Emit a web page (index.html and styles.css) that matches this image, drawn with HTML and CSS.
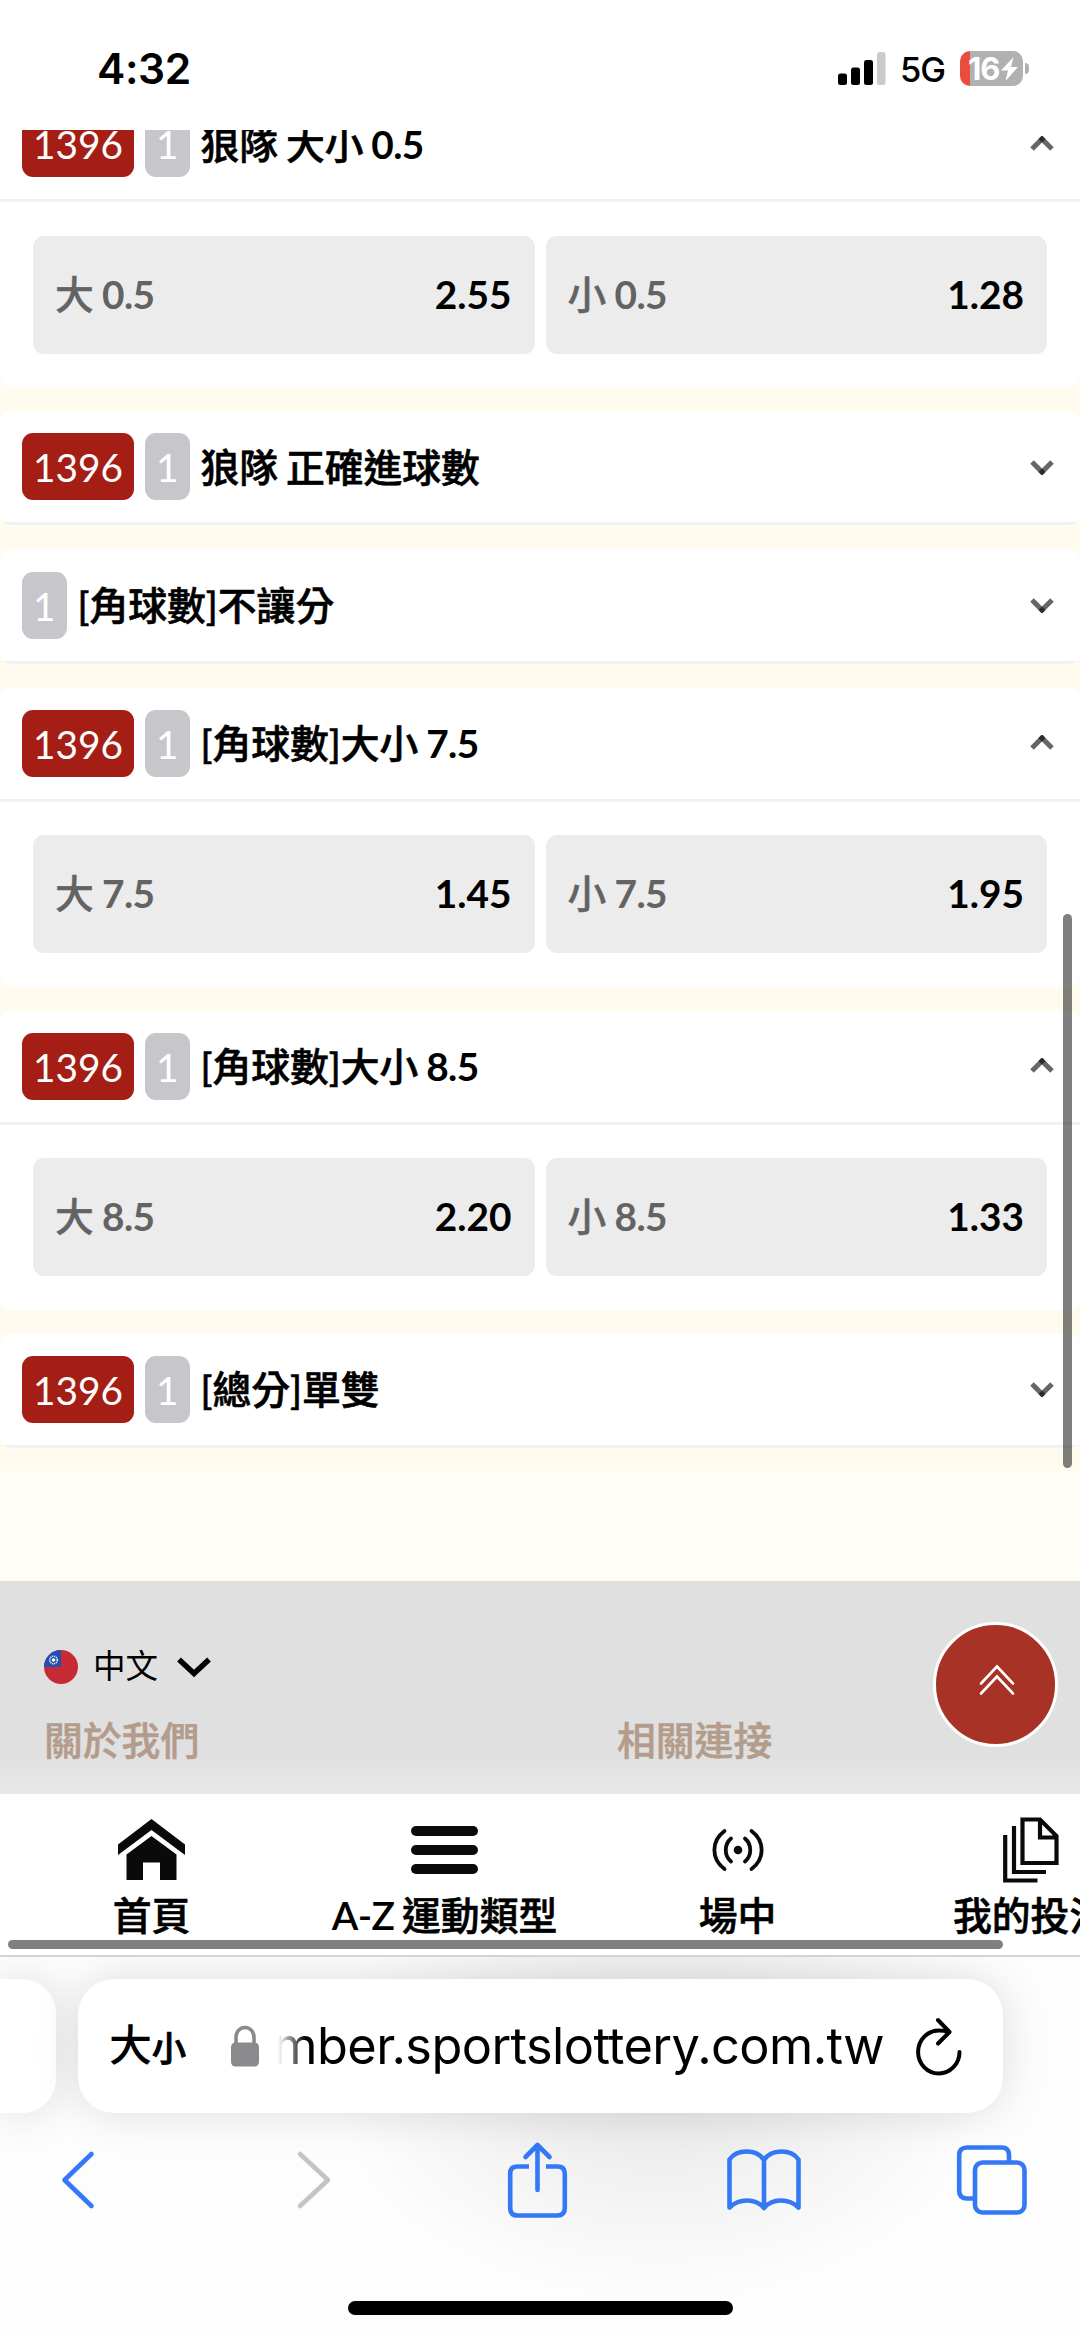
FILE: index.html
```html
<!DOCTYPE html>
<html lang="zh-Hant">
<head>
<meta charset="utf-8">
<title>台灣運彩</title>
<link rel="stylesheet" href="styles.css">
</head>
<body>
<svg class="defs" width="0" height="0">
  <symbol id="up" viewBox="0 0 24 16"><path d="M2 13 12 3l10 10" fill="none" stroke="#666" stroke-width="5"/><path d="M12 -.5 15.5 3 12 6.5 8.500 3z" fill="#2b2b2b"/></symbol>
  <symbol id="down" viewBox="0 0 24 16"><path d="M2 3 12 13 22 3" fill="none" stroke="#666" stroke-width="5"/><path d="M12 9.500 15.5 13 12 16.500 8.500 13z" fill="#2b2b2b"/></symbol>
</svg>
<div class="phone">
  <header class="status">
    <span class="clock">4:32</span>
    <div class="indicators">
      <svg class="signal" width="48" height="33" viewBox="0 0 48 33"><rect x="0" y="21.500" width="9" height="11.500" rx="2.500"/><rect x="13" y="15.500" width="9" height="17.500" rx="2.500"/><rect x="26" y="8" width="9" height="25" rx="2.500"/><rect x="39" y="0" width="8.500" height="33" rx="2.500" fill="#cbcbcb"/></svg>
      <span class="network">5G</span>
      <div class="battery"><span>16</span><svg width="17" height="24" viewBox="0 0 17 24"><path d="M12.500 0 0 13.500h7L4.500 24 17 10h-7z" fill="#fff"/></svg></div>
      <i class="battery-cap"></i>
    </div>
  </header>

  <main class="page">
    <div class="markets">
      <section class="card">
        <div class="head"><span class="code">1396</span><span class="count">1</span><h2>狼隊 大小 <b>0.5</b></h2><svg class="chev"><use href="#up"/></svg></div>
        <div class="options"><div class="opt"><span>大 <b>0.5</b></span><strong>2.55</strong></div><div class="opt"><span>小 <b>0.5</b></span><strong>1.28</strong></div></div>
      </section>
      <section class="card">
        <div class="head"><span class="code">1396</span><span class="count">1</span><h2>狼隊 正確進球數</h2><svg class="chev"><use href="#down"/></svg></div>
      </section>
      <section class="card">
        <div class="head"><span class="count">1</span><h2>[角球數]不讓分</h2><svg class="chev"><use href="#down"/></svg></div>
      </section>
      <section class="card">
        <div class="head"><span class="code">1396</span><span class="count">1</span><h2>[角球數]大小 <b>7.5</b></h2><svg class="chev"><use href="#up"/></svg></div>
        <div class="options"><div class="opt"><span>大 <b>7.5</b></span><strong>1.45</strong></div><div class="opt"><span>小 <b>7.5</b></span><strong>1.95</strong></div></div>
      </section>
      <section class="card">
        <div class="head"><span class="code">1396</span><span class="count">1</span><h2>[角球數]大小 <b>8.5</b></h2><svg class="chev"><use href="#up"/></svg></div>
        <div class="options"><div class="opt"><span>大 <b>8.5</b></span><strong>2.20</strong></div><div class="opt"><span>小 <b>8.5</b></span><strong>1.33</strong></div></div>
      </section>
      <section class="card">
        <div class="head"><span class="code">1396</span><span class="count">1</span><h2>[總分]單雙</h2><svg class="chev"><use href="#down"/></svg></div>
      </section>
    </div>
    <footer class="footer">
      <div class="lang">
        <svg width="34" height="34" viewBox="0 0 34 34"><clipPath id="round"><circle cx="17" cy="17" r="17"/></clipPath><g clip-path="url(#round)"><path fill="#c62a32" d="M0 0h34v34H0z"/><path fill="#2350ae" d="M0 0h17v17H0z"/><circle cx="9.500" cy="10" r="3.800" fill="none" stroke="#e8ecf6" stroke-width="1.600" stroke-dasharray="1.200 .8"/><circle cx="9.500" cy="10" r="1.800" fill="#fff"/></g></svg>
        <span>中文</span>
        <svg width="34" height="20" viewBox="0 0 34 20"><path d="M2 2.500 17 16.500 32 2.500" fill="none" stroke="#000" stroke-width="5.500"/></svg>
      </div>
      <div class="links"><h3>關於我們</h3><h3>相關連接</h3></div>
    </footer>
    <a class="to-top"><svg width="36" height="31" viewBox="0 0 36 31" fill="none" stroke="#fff" stroke-width="2.600" stroke-linecap="round"><path d="M2 19.500 18 2.500l16 17M2 29.500l16-17 16 17"/></svg></a>
    <i class="scroll-y"></i>
  </main>

  <nav class="tabs">
    <a><svg width="67" height="62" viewBox="0 0 67 62"><path d="M33.500 0 67 25.500V36L33.500 11 0 36V25.500z"/><path d="M33.500 17 58.500 35.500V61H42V43.500H25V61H8.500V35.500z"/></svg><span>首頁</span></a>
    <a><svg width="67" height="62" viewBox="0 0 67 62"><rect y="7" width="67" height="10" rx="5"/><rect y="26" width="67" height="10" rx="5"/><rect y="45" width="67" height="10" rx="5"/></svg><span><b>A-Z</b> 運動類型</span></a>
    <a><svg width="52" height="62" viewBox="0 0 52 62" fill="none" stroke="#0a0a0a" stroke-width="3.800" stroke-linecap="round"><circle cx="26" cy="31" r="4.300" fill="#0a0a0a" stroke="none"/><path d="M19 19.500c-7 6-7 17 0 23M33 19.500c7 6 7 17 0 23M12.500 12c-13.500 10-13.500 28 0 38M39.500 12c13.500 10 13.500 28 0 38"/></svg><span>場中</span></a>
    <a><svg width="56" height="62" viewBox="0 2 56 62" fill="none" stroke="#0a0a0a" stroke-width="4.200"><path d="M19.500 2.500H37L53.500 19V46H19.500zM37 2.500V20.500H53.500M11 9v46H43M2.200 18v45.500H34.500"/></svg><span>我的投注</span></a>
    <i class="scroll-x"></i>
  </nav>

  <div class="browser">
    <div class="address-row">
      <div class="pill prev"></div>
      <div class="pill address">
        <div class="text-size"><span>大</span><small>小</small></div>
        <svg class="lock" width="28" height="41" viewBox="0 0 28 41"><path d="M5 18V11a9 9.500 0 0 1 18 0v7" fill="none" stroke="#8a8a8d" stroke-width="3.600"/><rect y="16.500" width="28" height="24" rx="4.500" fill="#8a8a8d"/></svg>
        <div class="url"><span>mber.sportslottery.com.tw</span></div>
        <svg class="reload" width="46" height="57" viewBox="0 0 46 57" fill="none" stroke="#000" stroke-width="4" stroke-linecap="round" stroke-linejoin="round"><path d="M43.500 34A20.700 21.500 0 1 1 23 12.500q5 0 10 1.500M22 2 33.500 14 22 25.500"/></svg>
      </div>
    </div>
    <div class="toolbar">
      <svg class="back" width="34" height="58" viewBox="0 0 34 58"><path d="M30.500 3 3.500 29l27 26"/></svg>
      <svg class="forward" width="34" height="58" viewBox="0 0 34 58"><path d="m3 3 28 26L3 55"/></svg>
      <svg class="share" width="59" height="76" viewBox="0 0 59 76"><path d="M21 24.500H9.500Q2.200 24.500 2.200 31.500V66Q2.200 73.500 9.500 73.500H49.500Q56.800 73.500 56.800 66V31.500Q56.800 24.500 49.500 24.500H38" stroke-linecap="butt"/><path d="M29.500 48V3M17.500 15l12-12 12 12"/></svg>
      <svg class="book" width="74" height="64" viewBox="0 0 74 64"><path d="M37 60V12C30 1 10 .5 2.500 11.500V59.500C12 50 29 50 37 60 45 50 62 50 71.500 59.500V11.500C64 .5 44 1 37 12"/></svg>
      <svg class="windows" width="70" height="70" viewBox="0 0 70 70"><path d="M16 53.500H10Q2.200 53.500 2.200 46V10Q2.200 2.500 10 2.500H44.500Q52 2.500 52 10V16"/><rect x="18" y="17.500" width="49.500" height="50" rx="7.500"/></svg>
    </div>
    <i class="home-bar"></i>
  </div>
</div>
</body>
</html>
```
FILE: styles.css
```css
* { box-sizing: border-box; margin: 0; padding: 0; }
body { font-family: Lato, "Noto Sans CJK TC", sans-serif; font-size: 38.8px; color: #000; background: #fff; }
h2, h3 { font-size: inherit; }
svg { display: block; flex: none; overflow: visible; }
i { display: block; }
.defs { position: absolute; }
.phone { width: 1080px; height: 2337px; display: flex; flex-direction: column; overflow: hidden; }

.status { height: 130px; flex: none; display: flex; justify-content: space-between; align-items: center; padding: 7px 51px 0 97px; background: #fff; font-family: Inter, "Noto Sans", sans-serif; }
.clock { font-size: 42.500px; font-weight: 600; line-height: 50px; letter-spacing: -.4px; }
.indicators { display: flex; align-items: center; }
.network { font-size: 34.500px; font-weight: 500; letter-spacing: -1px; margin: 2px 15px 0 14px; }
.battery { display: flex; align-items: center; gap: 1px; width: 63px; height: 35px; padding-left: 8px; border-radius: 10px; background: linear-gradient(90deg, #ea4d3d 10px, #b1b1b1 10px); color: #fff; font-size: 31px; font-weight: 700; letter-spacing: -1px; }
.battery-cap { width: 4px; height: 11px; margin-left: 2px; border-radius: 0 5px 5px 0; background: #b1b1b1; }

.page { position: relative; height: 1664px; flex: none; overflow: hidden; background: #fffdf5; }
.markets { margin-top: -41.700px; padding-bottom: 23px; display: flex; flex-direction: column; gap: 24px; background: #fffbee; }
.card { background: #fff; border-radius: 11px; overflow: hidden; }
.head { display: flex; align-items: center; gap: 11px; height: 114.100px; padding: 0 26px 0 22px; border-bottom: 3px solid #f0f0f7; }
.code, .count { height: 67px; line-height: 68px; padding: 0 11px; border-radius: 11px; color: #fff; background: #a51e15; }
.count { background: #c7c6cb; }
.head h2 { font-weight: 500; line-height: 60px; word-spacing: -2px; -webkit-text-stroke: .6px; }
.head h2 b, .opt span b { font-weight: 700; letter-spacing: -.6px; -webkit-text-stroke: 0; }
.chev { width: 24px; height: 16px; margin-left: auto; }
.options { display: grid; grid-template-columns: 1fr 1fr; gap: 11px; padding: 33.300px 33px 33.700px; }
.opt { display: flex; justify-content: space-between; height: 118px; line-height: 116px; padding: 0 23px 0 22px; border-radius: 11px; background: #ececec; }
.opt span { font-weight: 500; color: #636363; word-spacing: -1.500px; -webkit-text-stroke: .4px; }
.opt strong { font-weight: 700; }

.footer { margin-top: 110.500px; height: 213px; padding: 63px 44px 0; background: linear-gradient(#e0e0e0 82%, #e8e8e8); }
.lang { display: flex; align-items: center; height: 46px; font-size: 32.500px; }
.lang span { margin: 0 19px 0 15px; line-height: 46px; padding-bottom: 3px; }
.links { display: grid; grid-template-columns: 573px 1fr; margin-top: 21px; line-height: 58px; color: #b39c8b; }
.links h3 { font-weight: 500; -webkit-text-stroke: .5px; }
.to-top { position: absolute; right: 22px; top: 1492px; width: 125px; height: 125px; border: 3px solid #fff; border-radius: 50%; background: #a73225; display: flex; align-items: center; justify-content: center; padding: 0 0 10px 2px; }
.scroll-y { position: absolute; right: 8px; top: 784px; width: 9px; height: 554px; border-radius: 5px; background: rgba(0,0,0,.5); }

.tabs { position: relative; height: 163px; flex: none; display: flex; padding-left: 5px; overflow: hidden; background: #fff; border-bottom: 2px solid #d4d4d4; font-weight: 500; fill: #0a0a0a; }
.tabs a { flex: 0 0 293px; display: flex; flex-direction: column; align-items: center; padding-top: 25px; }
.tabs span { line-height: 56px; margin-top: 6px; white-space: nowrap; word-spacing: -2px; -webkit-text-stroke: .6px; }
.tabs b { font-weight: 600; letter-spacing: -.6px; -webkit-text-stroke: 0; }
.scroll-x { position: absolute; left: 8px; bottom: 6px; width: 995px; height: 9px; border-radius: 5px; background: #808080; }

.browser { flex: 1; display: flex; flex-direction: column; align-items: center; overflow: hidden; background: radial-gradient(ellipse 330px 230px at 660px 110px, #e6e6e6, rgba(253,253,253,0)), #fdfdfd; }
.address-row { display: flex; gap: 22px; width: 100%; padding-top: 22px; }
.pill { height: 134px; background: #fff; border-radius: 36px; box-shadow: 0 0 45px rgba(0,0,0,.13); }
.prev { width: 56px; border-radius: 0 34px 34px 0; }
.address { position: relative; width: 925px; display: flex; align-items: center; padding: 0 41px 0 31px; }
.text-size { display: flex; align-items: baseline; width: 122px; font-weight: 500; line-height: 60px; }
.text-size span { font-size: 43px; }
.text-size small { font-size: 34px; -webkit-text-stroke: 1px; }
.url { flex: 1; margin: 0 0 0 13px; height: 70px; display: flex; justify-content: flex-end; overflow: hidden; padding-right: 32px; font: 400 50.500px/70px Inter, "Noto Sans", sans-serif; letter-spacing: -.6px; -webkit-mask-image: linear-gradient(90deg, transparent 6px, #000 34px); mask-image: linear-gradient(90deg, transparent 6px, #000 34px); }
.toolbar { width: 100%; height: 134px; display: flex; gap: 156px; align-items: center; padding-left: 61px; fill: none; stroke: #3478f6; stroke-width: 4.600; stroke-linecap: round; stroke-linejoin: round; }
.toolbar .forward { stroke: #c4c4c6; margin-left: 46px; }
.toolbar .share { margin: 0 4px 0 21px; }
.home-bar { width: 385px; height: 14px; margin-top: 54px; border-radius: 7px; background: #000; }
```
